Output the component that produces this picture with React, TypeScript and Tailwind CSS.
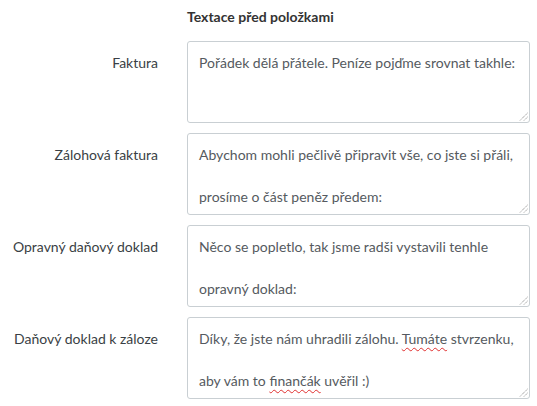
import React from "react";

type Part = { t: string; err?: boolean };
type Row = { label: string; lines: Part[][] };

const rows: Row[] = [
  { label: "Faktura", lines: [[{ t: "Pořádek dělá přátele. Peníze pojďme srovnat takhle:" }]] },
  {
    label: "Zálohová faktura",
    lines: [
      [{ t: "Abychom mohli pečlivě připravit vše, co jste si přáli," }],
      [{ t: "prosíme o část peněz předem:" }],
    ],
  },
  {
    label: "Opravný daňový doklad",
    lines: [
      [{ t: "Něco se popletlo, tak jsme radši vystavili tenhle" }],
      [{ t: "opravný doklad:" }],
    ],
  },
  {
    label: "Daňový doklad k záloze",
    lines: [
      [
        { t: "Díky, že jste nám uhradili zálohu. " },
        { t: "Tumáte", err: true },
        { t: " stvrzenku," },
      ],
      [{ t: "aby vám to " }, { t: "finančák", err: true }, { t: " uvěřil :)" }],
    ],
  },
];

function Grip() {
  return (
    <svg className="absolute right-[1px] bottom-[1px]" width="9" height="9" viewBox="0 0 9 9">
      <line x1="8.5" y1="1" x2="1" y2="8.5" stroke="#8a8a8a" strokeWidth="1" strokeDasharray="1.2 0.8" />
      <line x1="8.5" y1="5" x2="5" y2="8.5" stroke="#8a8a8a" strokeWidth="1" strokeDasharray="1.2 0.8" />
    </svg>
  );
}

export default function App() {
  return (
    <div
      className="w-[537px] h-[406px] bg-white overflow-hidden text-[14px]"
      style={{ fontFamily: "Lato, 'Open Sans', sans-serif" }}
    >
      <div className="flex pt-[7px]">
        <div className="w-[187px] shrink-0" />
        <div className="font-bold text-[#333] leading-[20px]">Textace před položkami</div>
      </div>
      <div className="flex flex-col gap-[10px] mt-[14px]">
        {rows.map((r) => (
          <div key={r.label} className="flex h-[82px]">
            <div className="w-[158px] shrink-0 text-right text-[#3a3f45] leading-[42px] pt-[1px]">
              {r.label}
            </div>
            <div className="ml-[29px] w-[343px] h-[82px] relative border border-[#c9cfd3] rounded-[3px] overflow-hidden pl-[11px] text-[#555a60] leading-[42px]">
              {r.lines.map((ln, i) => (
                <div key={i} className="whitespace-nowrap">
                  {ln.map((p, j) =>
                    p.err ? (
                      <span
                        key={j}
                        className="underline decoration-wavy decoration-[#e03030] decoration-1 underline-offset-[3px]"
                      >
                        {p.t}
                      </span>
                    ) : (
                      <span key={j}>{p.t}</span>
                    )
                  )}
                </div>
              ))}
              <Grip />
            </div>
          </div>
        ))}
      </div>
    </div>
  );
}
